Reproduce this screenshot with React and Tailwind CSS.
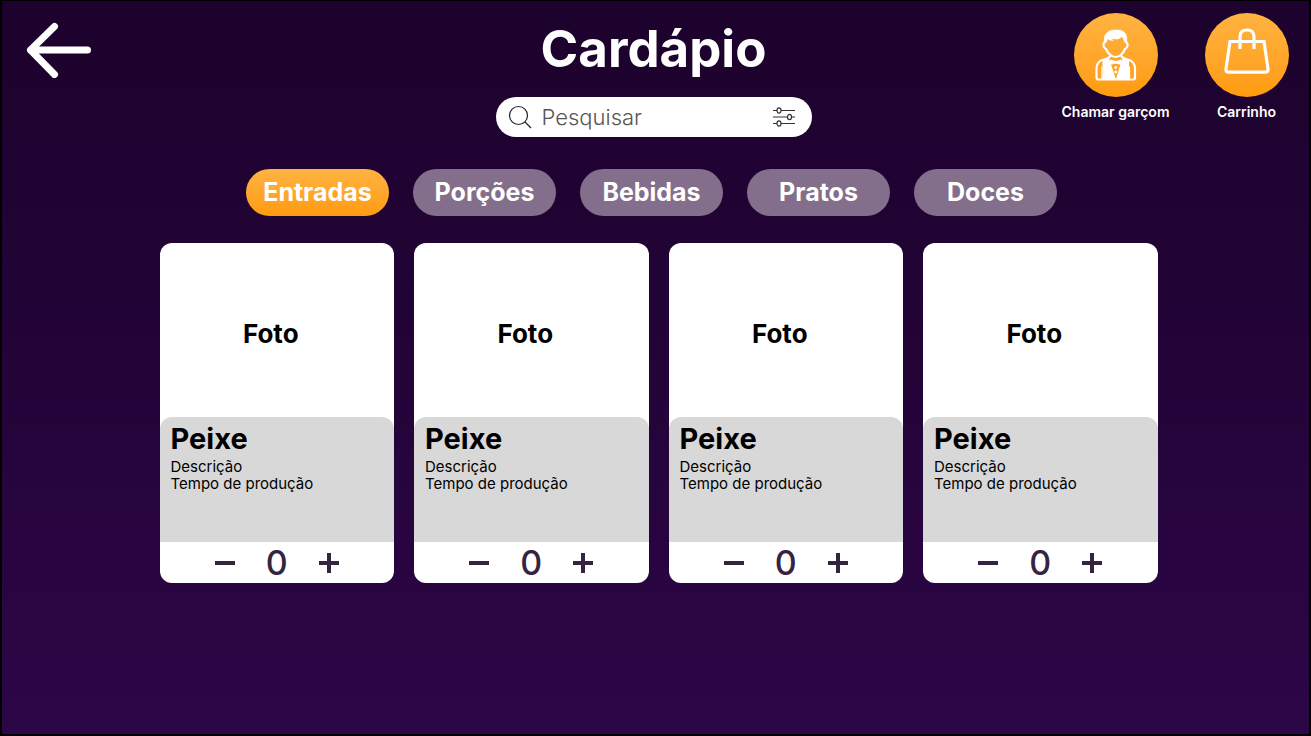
import { useState } from "react";

const categories = ["Entradas", "Porções", "Bebidas", "Pratos", "Doces"];

const dishes = [1, 2, 3, 4].map((id) => ({
  id,
  name: "Peixe",
  description: "Descrição",
  time: "Tempo de produção",
}));

function BackIcon() {
  return (
    <svg viewBox="0 0 66 56" className="h-14 w-[66px]" fill="none" stroke="currentColor" strokeWidth="7" strokeLinecap="round" strokeLinejoin="round" aria-hidden="true">
      <path d="M28.500 4.500 4.500 28 28.500 52.500M4.500 28H61.500" />
    </svg>
  );
}

function WaiterIcon() {
  return (
    <svg viewBox="0 0 42 52" className="h-[52px] w-[42px]" fill="none" stroke="#fff" strokeWidth="2.200" strokeLinecap="round" strokeLinejoin="round" aria-hidden="true">
      <path d="M9.500 14C8 6 12 1.500 19 1H23C30 1.500 33 6 31.500 14L29.500 13C29 10.500 28.500 9 27 7.500C24 11 19.500 10 16.500 9.500C17 10.500 17.500 11 18 11.500C15.500 11.500 13.500 10.500 12.500 9.500L11.500 13Z" fill="#fff" strokeWidth="0.600" />
      <path d="M10 12.500C7.500 14.500 8 19 11 20C12.500 24 16.500 28 20.500 28S28.500 24 30 20C33 19 33.500 14.500 31 12.500" />
      <path d="M15.500 26.500C14.500 28.500 13 29.500 9 30.500C4 31.500 1.500 35.500 1.500 40V48.500Q1.500 50.500 3.500 50.500H38Q40 50.500 40 48.500V40C40 35.500 37.500 31.500 32.500 30.500C28.500 29.500 27 28.500 26 26.500" />
      <path d="M7.500 31 14.500 28.500 21 50 27 28.500 34 31V51H7.500Z" fill="#fff" stroke="none" />
      <path d="M14 29.500 20.700 49.500 27.500 29.500Z" fill="#ffa522" stroke="none" />
      <path d="M15 30.500 19.500 31.800H22L26.500 30.500V36L22 34.800H19.500L15 36Z" fill="#fff" stroke="none" />
      <path d="M7 38V50M34.500 38V50" strokeWidth="1.200" />
      <circle cx="20.700" cy="38.500" r="1.400" fill="#fff" stroke="none" />
      <circle cx="20.700" cy="43" r="1.400" fill="#fff" stroke="none" />
    </svg>
  );
}

function BagIcon() {
  return (
    <svg viewBox="0 0 46 54" className="h-[54px] w-[46px]" fill="none" stroke="#fff" strokeWidth="3.200" aria-hidden="true">
      <path d="M6 13.500H40L44 41Q44.500 44.200 41 44.200H5Q1.500 44.200 2 41Z" />
      <path d="M16 21V9Q16 2 23 2T30 9V21" />
    </svg>
  );
}

function SearchIcon() {
  return (
    <svg viewBox="0 0 24 24" className="h-6 w-6 shrink-0" fill="none" stroke="#222" strokeWidth="1.200" aria-hidden="true">
      <circle cx="10.500" cy="10.500" r="9" />
      <path d="M17 17 23 23" />
    </svg>
  );
}

function FilterIcon() {
  return (
    <svg viewBox="0 0 24 20" className="h-5 w-6" fill="none" stroke="#333" strokeWidth="1.200" aria-hidden="true">
      <path d="M1 3.500H5M9 3.500H23M1 10H15.500M19.500 10H23M1 16.500H5M9 16.500H23" />
      <ellipse cx="7" cy="3.500" rx="2" ry="2.700" />
      <ellipse cx="17.500" cy="10" rx="2" ry="2.700" />
      <ellipse cx="7" cy="16.500" rx="2" ry="2.700" />
    </svg>
  );
}

function ActionButton({ label, children }) {
  return (
    <button type="button" className="flex w-[107px] flex-col items-center gap-[5px] text-sm font-semibold whitespace-nowrap text-white">
      <span className="flex size-[84px] items-center justify-center rounded-full bg-linear-to-b from-[#ffb340] to-[#ff9b0b]">
        {children}
      </span>
      {label}
    </button>
  );
}

function DishCard({ dish }) {
  const [count, setCount] = useState(0);
  return (
    <article className="overflow-hidden rounded-xl bg-white text-black">
      <div className="flex h-[174px] items-center justify-center pt-1.5 pr-3 text-[26px] font-bold">Foto</div>
      <div className="h-[125px] rounded-t-xl bg-[#d8d8d8] px-[11px] pt-1 text-[15px] leading-[17px]">
        <h2 className="pb-0.5 text-[29px] leading-[35px] font-bold">{dish.name}</h2>
        <p>{dish.description}</p>
        <p>{dish.time}</p>
      </div>
      <div className="flex h-[41px] items-center justify-center gap-[30px] text-[#35243f]">
        <button type="button" aria-label="Diminuir" onClick={() => setCount(Math.max(0, count - 1))}>
          <svg viewBox="0 0 20 20" className="size-5" stroke="currentColor" strokeWidth="4" aria-hidden="true">
            <path d="M0 10H20" />
          </svg>
        </button>
        <output className="w-6 text-center text-[34px] leading-10 font-medium">{count}</output>
        <button type="button" aria-label="Aumentar" onClick={() => setCount(count + 1)}>
          <svg viewBox="0 0 20 20" className="size-5" stroke="currentColor" strokeWidth="4" aria-hidden="true">
            <path d="M0 10H20M10 0V20" />
          </svg>
        </button>
      </div>
    </article>
  );
}

export default function App() {
  const [active, setActive] = useState("Entradas");
  return (
    <div className="min-h-screen border-2 border-t border-black bg-linear-to-b from-[#1c022c] to-[#2c0646] font-['Inter',sans-serif]">
      <header className="grid grid-cols-[1fr_auto_1fr] items-start px-2">
        <button type="button" aria-label="Voltar" className="mt-[21px] ml-4 w-fit text-white">
          <BackIcon />
        </button>
        <div className="flex flex-col items-center gap-4 pt-4 pr-1">
          <h1 className="text-[51px] leading-[64px] font-bold text-white">Cardápio</h1>
          <div className="flex h-10 w-[316px] items-center gap-2.5 rounded-full bg-white pr-4 pl-3">
            <SearchIcon />
            <input type="search" aria-label="Pesquisar" placeholder="Pesquisar" className="min-w-0 flex-1 text-[22px] font-light text-black outline-none placeholder:text-[#555]" />
            <button type="button" aria-label="Filtros">
              <FilterIcon />
            </button>
          </div>
        </div>
        <div className="flex justify-end gap-6 pt-3 pr-px">
          <ActionButton label="Chamar garçom">
            <WaiterIcon />
          </ActionButton>
          <ActionButton label="Carrinho">
            <BagIcon />
          </ActionButton>
        </div>
      </header>
      <main>
        <nav aria-label="Categorias" className="flex flex-wrap justify-center gap-6 pt-8 pr-2">
          {categories.map((name) => (
            <button
              key={name}
              type="button"
              aria-pressed={name === active}
              onClick={() => setActive(name)}
              className={
                name === active
                  ? "h-[47px] w-[143px] rounded-full bg-linear-to-b from-[#ffb340] to-[#ff9b0b] text-[25px] font-bold text-white"
                  : "h-[47px] w-[143px] rounded-full bg-[#836e8c] text-[25px] font-bold text-white"
              }
            >
              {name}
            </button>
          ))}
        </nav>
        <section className="flex justify-center pt-[27px] pl-1.5">
          <div className="grid w-full max-w-[998px] grid-cols-4 gap-5">
            {dishes.map((dish) => (
              <DishCard key={dish.id} dish={dish} />
            ))}
          </div>
        </section>
      </main>
    </div>
  );
}
